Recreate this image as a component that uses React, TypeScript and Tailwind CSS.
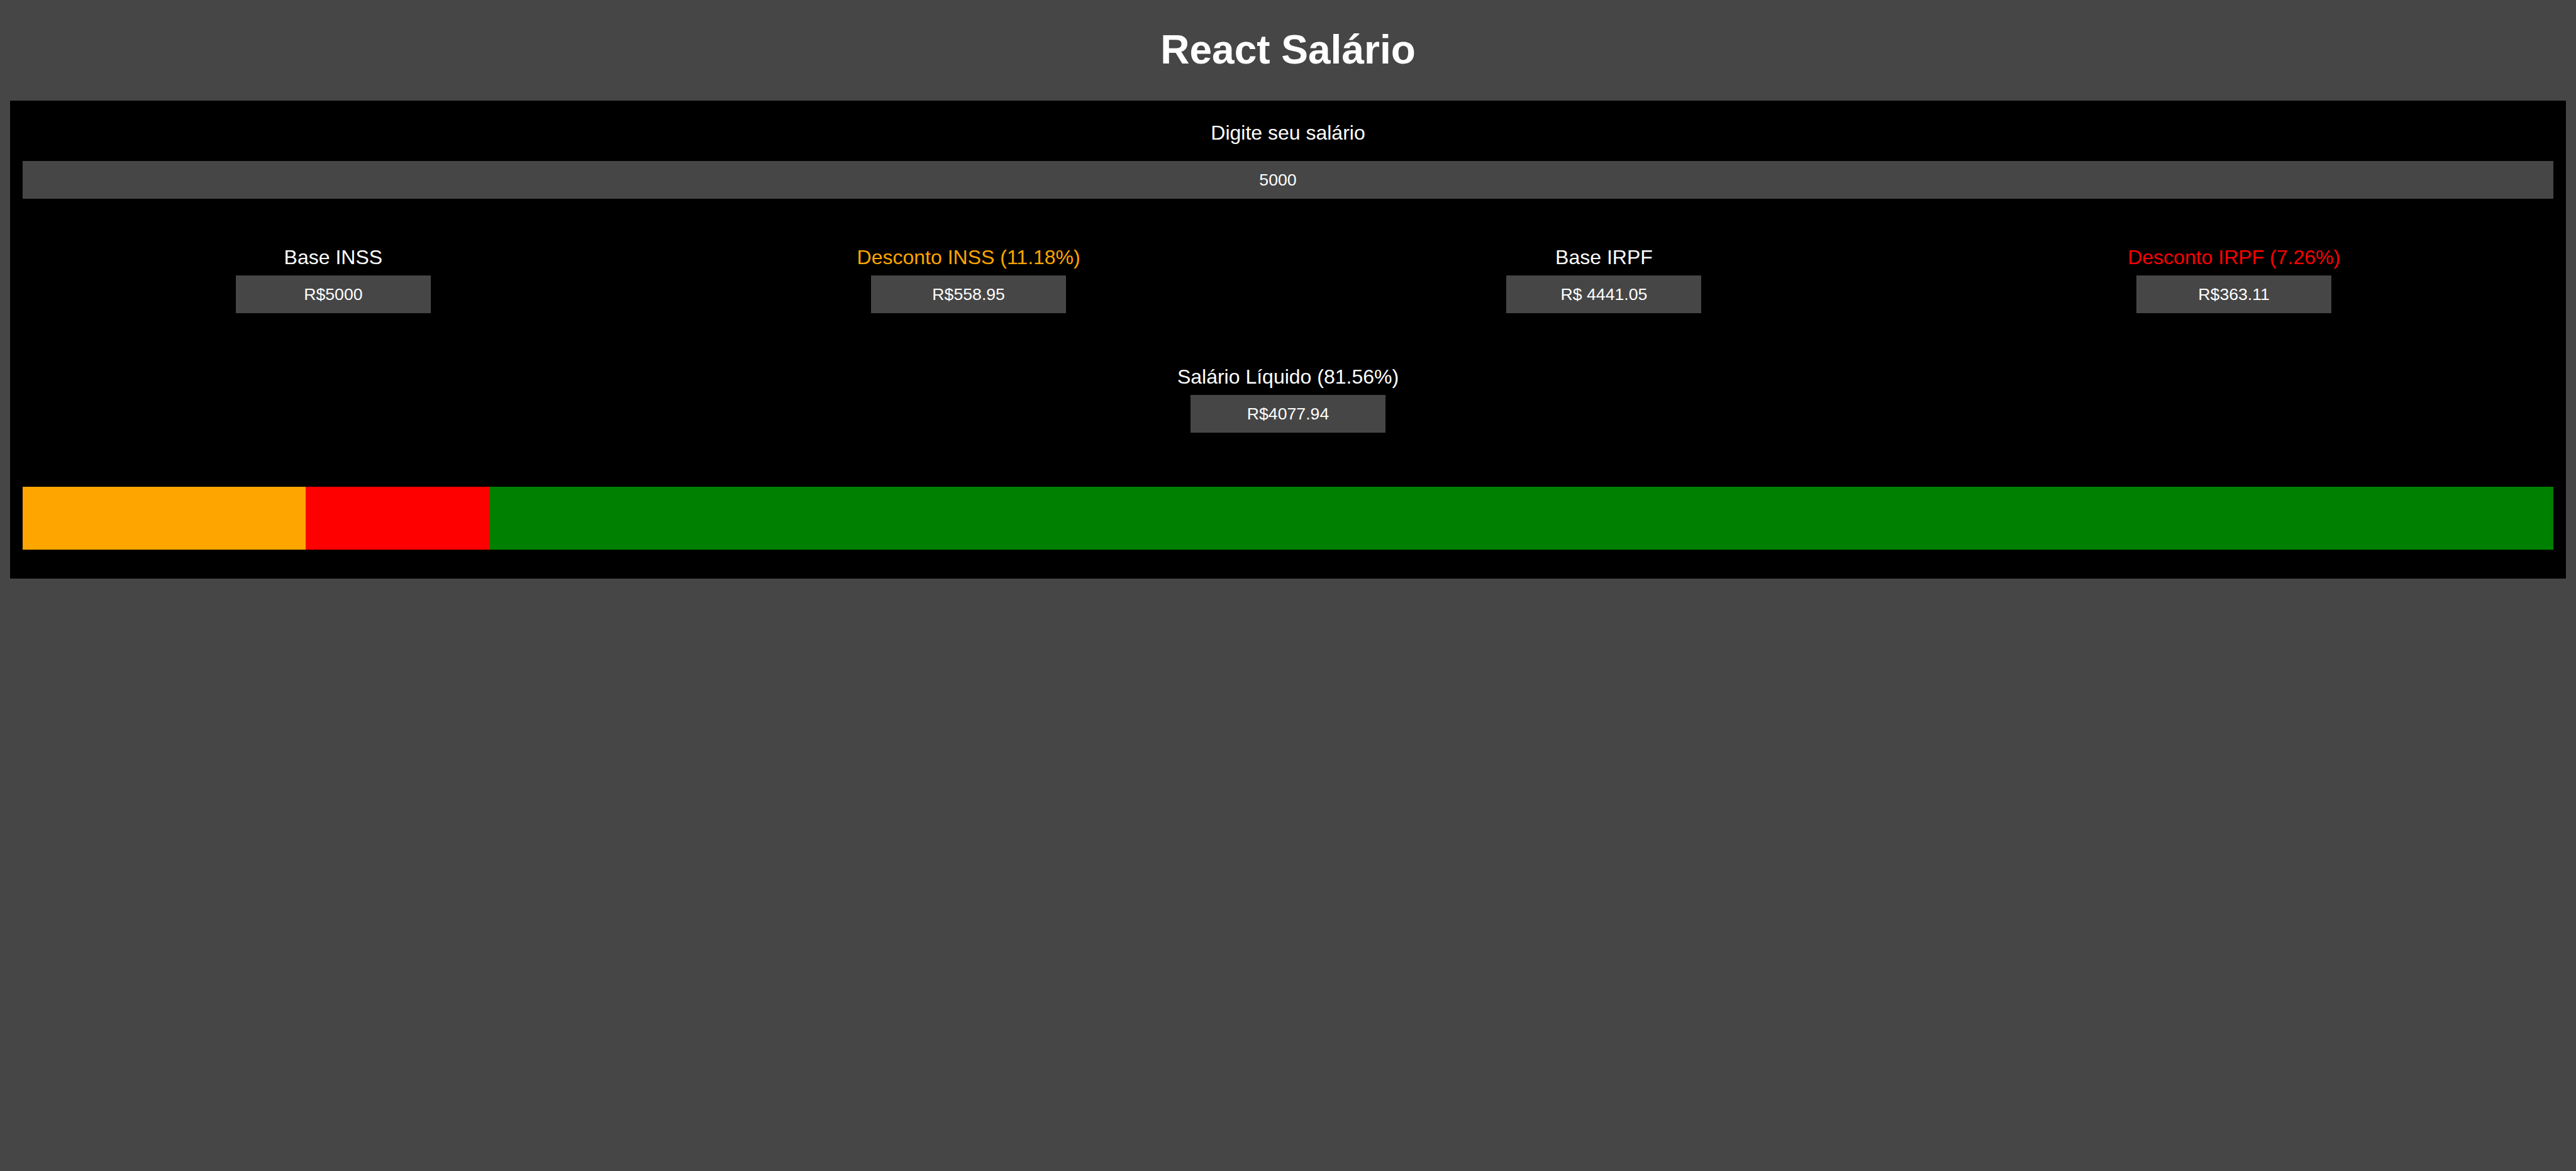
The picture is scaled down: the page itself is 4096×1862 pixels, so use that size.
import React from "react";

const Field = ({ label, value, color }: { label: string; value: string; color: string }) => (
  <div className="flex flex-col items-center">
    <span className={`text-[32px] leading-[36px] ${color}`}>{label}</span>
    <input
      readOnly
      value={value}
      className="mt-[11px] w-[310px] h-[60px] bg-[#464646] text-white text-center text-[26.67px] outline-none border-0 px-[4px]"
      style={{ fontFamily: '"Liberation Sans", Arial, sans-serif' }}
    />
  </div>
);

export default function App() {
  return (
    <div
      className="min-h-[1862px] bg-[#464646] overflow-hidden"
      style={{ fontFamily: '"Liberation Sans", Arial, sans-serif' }}
    >
      <h1 className="text-[64px] leading-[72px] font-bold text-white text-center pt-[43px] pb-[45px]">
        React Salário
      </h1>
      <div className="mx-[16px] bg-black px-[20px] pt-[33px] pb-[46px]">
        <div className="text-center text-white text-[32px] leading-[36px]">Digite seu salário</div>
        <input
          readOnly
          value="5000"
          className="mt-[27px] block w-full h-[60px] bg-[#464646] text-white text-center text-[26.67px] outline-none border-0 pl-[4px] pr-[36px]"
          style={{ fontFamily: '"Liberation Sans", Arial, sans-serif' }}
        />
        <div className="mt-[75px] flex justify-around">
          <Field label="Base INSS" value="R$5000" color="text-white" />
          <Field label="Desconto INSS (11.18%)" value="R$558.95" color="text-[#ffa500]" />
          <Field label="Base IRPF" value="R$ 4441.05" color="text-white" />
          <Field label="Desconto IRPF (7.26%)" value="R$363.11" color="text-[#ff0000]" />
        </div>
        <div className="mt-[83px] flex justify-center">
          <Field label="Salário Líquido (81.56%)" value="R$4077.94" color="text-white" />
        </div>
        <div className="mt-[86px] flex h-[100px] w-full">
          <div className="h-full bg-[#ffa500]" style={{ width: "11.18%" }} />
          <div className="h-full bg-[#ff0000]" style={{ width: "7.26%" }} />
          <div className="h-full bg-[#008000]" style={{ width: "81.56%" }} />
        </div>
      </div>
    </div>
  );
}
